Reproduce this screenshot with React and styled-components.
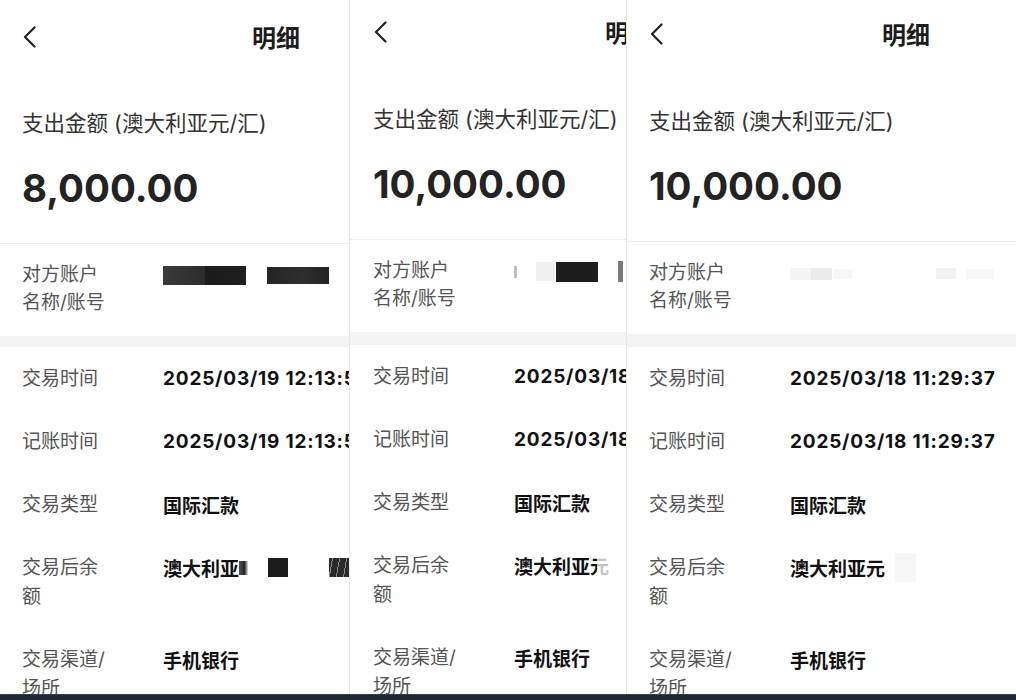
import React from "react";
import styled, { createGlobalStyle } from "styled-components";

const GlobalStyle = createGlobalStyle`
  html, body { margin: 0; padding: 0; background: #fff; }
  body { font-family: Inter, "Noto Sans CJK SC", sans-serif; -webkit-font-smoothing: antialiased; }
  * { box-sizing: border-box; }
`;

const Page = styled.div`
  width: 1016px;
  height: 700px;
  display: flex;
  flex-direction: column;
  overflow: hidden;
  background: #fff;
`;

const Strip = styled.div`
  display: flex;
  height: 694px;
  flex: none;
`;

const BottomBar = styled.div`
  flex: 1;
  background: #1d2833;
  border-top: 1px solid #33414d;
`;

const Panel = styled.div`
  width: ${(p) => p.$w}px;
  flex: none;
  overflow: hidden;
  border-right: ${(p) => (p.$edge ? "1px solid #e8e8e8" : "none")};
`;

const Phone = styled.div`
  width: ${(p) => p.$w}px;
  margin-top: ${(p) => p.$shift}px;
`;

const Header = styled.div`
  display: grid;
  grid-template-columns: 1fr auto 1fr;
  align-items: center;
  height: ${(p) => p.$h}px;
  padding: 0 ${(p) => p.$pad}px;
`;

const Back = styled.svg`
  justify-self: start;
  margin-left: 1px;
`;

const Title = styled.div`
  font-family: "Noto Sans CJK SC", sans-serif;
  font-size: 24px;
  font-weight: 700;
  color: #1c1c1c;
  line-height: 30px;
`;

const Summary = styled.div`
  padding: 34px ${(p) => p.$pad}px 31px;
`;

const Caption = styled.div`
  font-size: 21.5px;
  line-height: 30px;
  color: #333;
  white-space: nowrap;
`;

const Amount = styled.div`
  margin-top: 26px;
  font-family: Inter, sans-serif;
  font-size: 38.5px;
  line-height: 48px;
  font-weight: 700;
  color: #232323;
  white-space: nowrap;
`;

const Rule = styled.div`
  height: 1px;
  background: #eeeeee;
`;

const Band = styled.div`
  height: ${(p) => p.$h}px;
  background: #f3f3f3;
`;

const Row = styled.div`
  display: grid;
  grid-template-columns: 141px 1fr;
  align-items: start;
  padding: 17px ${(p) => p.$pad}px ${(p) => (p.$top ? "19px" : "17px")};
`;

const Label = styled.div`
  width: 88px;
  font-size: 19px;
  line-height: ${(p) => (p.$tight ? 28 : 29)}px;
  color: #555;
`;

const Value = styled.div`
  display: flex;
  align-items: center;
  height: 29px;
  font-size: 19px;
  font-weight: 700;
  color: #111;
  white-space: nowrap;
  letter-spacing: ${(p) => (p.$num ? "0.8px" : "0")};
`;

const Veil = styled.span`
  flex: none;
  display: inline-block;
  width: ${(p) => p.$w}px;
  height: ${(p) => p.$h}px;
  margin-left: ${(p) => p.$ml || 0}px;
  background: ${(p) => p.$bg};
`;

const panels = [
  {
    w: 350,
    edge: true,
    phone: 552,
    shift: 0,
    head: 74,
    pad: 22,
    band: 11,
    amount: "8,000.00",
    time: "2025/03/19 12:13:56",
    counter: [
      { w: 83, h: 19, ml: 0, bg: "linear-gradient(90deg,#3a3a3a 0%,#2d2d2d 50%,#1c1c1c 51%,#202020 100%)" },
      { w: 62, h: 17, ml: 21, bg: "linear-gradient(90deg,#262626,#2e2e2e 60%,#232323)" },
    ],
    balance: "澳大利亚",
    balanceVeils: [
      { w: 9, h: 14, ml: 0, bg: "linear-gradient(90deg,#555,#222 60%,#ddd)" },
      { w: 20, h: 19, ml: 20, bg: "#1d1d1d" },
      { w: 20, h: 19, ml: 41, bg: "repeating-linear-gradient(100deg,#2a2a2a 0 3px,#888 3px 4px,#2a2a2a 4px 7px)" },
    ],
  },
  {
    w: 277,
    edge: true,
    phone: 558,
    shift: -6,
    head: 76,
    pad: 23,
    band: 13,
    amount: "10,000.00",
    time: "2025/03/18 11:29:37",
    counter: [
      { w: 3, h: 12, ml: 0, bg: "#bdbdbd" },
      { w: 19, h: 19, ml: 19, bg: "#eeeeee" },
      { w: 42, h: 20, ml: 1, bg: "#1d1d1d" },
      { w: 5, h: 21, ml: 20, bg: "#7a7a7a" },
    ],
    balance: "澳大利亚元",
    balanceVeils: [{ w: 14, h: 22, ml: -12, bg: "rgba(255,255,255,0.75)" }],
  },
  {
    w: 389,
    edge: false,
    phone: 558,
    shift: -4,
    head: 76,
    pad: 22,
    band: 13,
    amount: "10,000.00",
    time: "2025/03/18 11:29:37",
    counter: [
      { w: 21, h: 12, ml: 0, bg: "#f4f4f4" },
      { w: 21, h: 12, ml: 0, bg: "#ececec" },
      { w: 18, h: 10, ml: 2, bg: "#f7f7f7" },
      { w: 20, h: 11, ml: 84, bg: "#f1f1f1" },
      { w: 28, h: 10, ml: 10, bg: "#f7f7f7" },
    ],
    balance: "澳大利亚元",
    balanceVeils: [{ w: 21, h: 29, ml: 10, bg: "#f6f6f6" }],
  },
];

function Detail({ d }) {
  return (
    <Panel $w={d.w} $edge={d.edge}>
      <Phone $w={d.phone} $shift={d.shift}>
        <Header $h={d.head} $pad={d.pad}>
          <Back width="13" height="22" viewBox="0 0 13 22" fill="none">
            <polyline points="11.5,1.5 2,11 11.5,20.5" stroke="#222" strokeWidth="2.2" strokeLinecap="round" strokeLinejoin="round" />
          </Back>
          <Title>明细</Title>
          <span />
        </Header>
        <Summary $pad={d.pad}>
          <Caption>支出金额 (澳大利亚元/汇)</Caption>
          <Amount>{d.amount}</Amount>
        </Summary>
        <Rule />
        <Row $pad={d.pad} $top>
          <Label $tight>对方账户名称/账号</Label>
          <Value>
            {d.counter.map((v, i) => (
              <Veil key={i} $w={v.w} $h={v.h} $ml={v.ml} $bg={v.bg} />
            ))}
          </Value>
        </Row>
        <Band $h={d.band} />
        <Row $pad={d.pad}>
          <Label>交易时间</Label>
          <Value $num>{d.time}</Value>
        </Row>
        <Row $pad={d.pad}>
          <Label>记账时间</Label>
          <Value $num>{d.time}</Value>
        </Row>
        <Row $pad={d.pad}>
          <Label>交易类型</Label>
          <Value>国际汇款</Value>
        </Row>
        <Row $pad={d.pad}>
          <Label>交易后余额</Label>
          <Value>
            {d.balance}
            {d.balanceVeils.map((v, i) => (
              <Veil key={i} $w={v.w} $h={v.h} $ml={v.ml} $bg={v.bg} />
            ))}
          </Value>
        </Row>
        <Row $pad={d.pad}>
          <Label>交易渠道/场所</Label>
          <Value>手机银行</Value>
        </Row>
      </Phone>
    </Panel>
  );
}

export default function App() {
  return (
    <>
      <GlobalStyle />
      <Page>
        <Strip>
          {panels.map((d, i) => (
            <Detail key={i} d={d} />
          ))}
        </Strip>
        <BottomBar />
      </Page>
    </>
  );
}
